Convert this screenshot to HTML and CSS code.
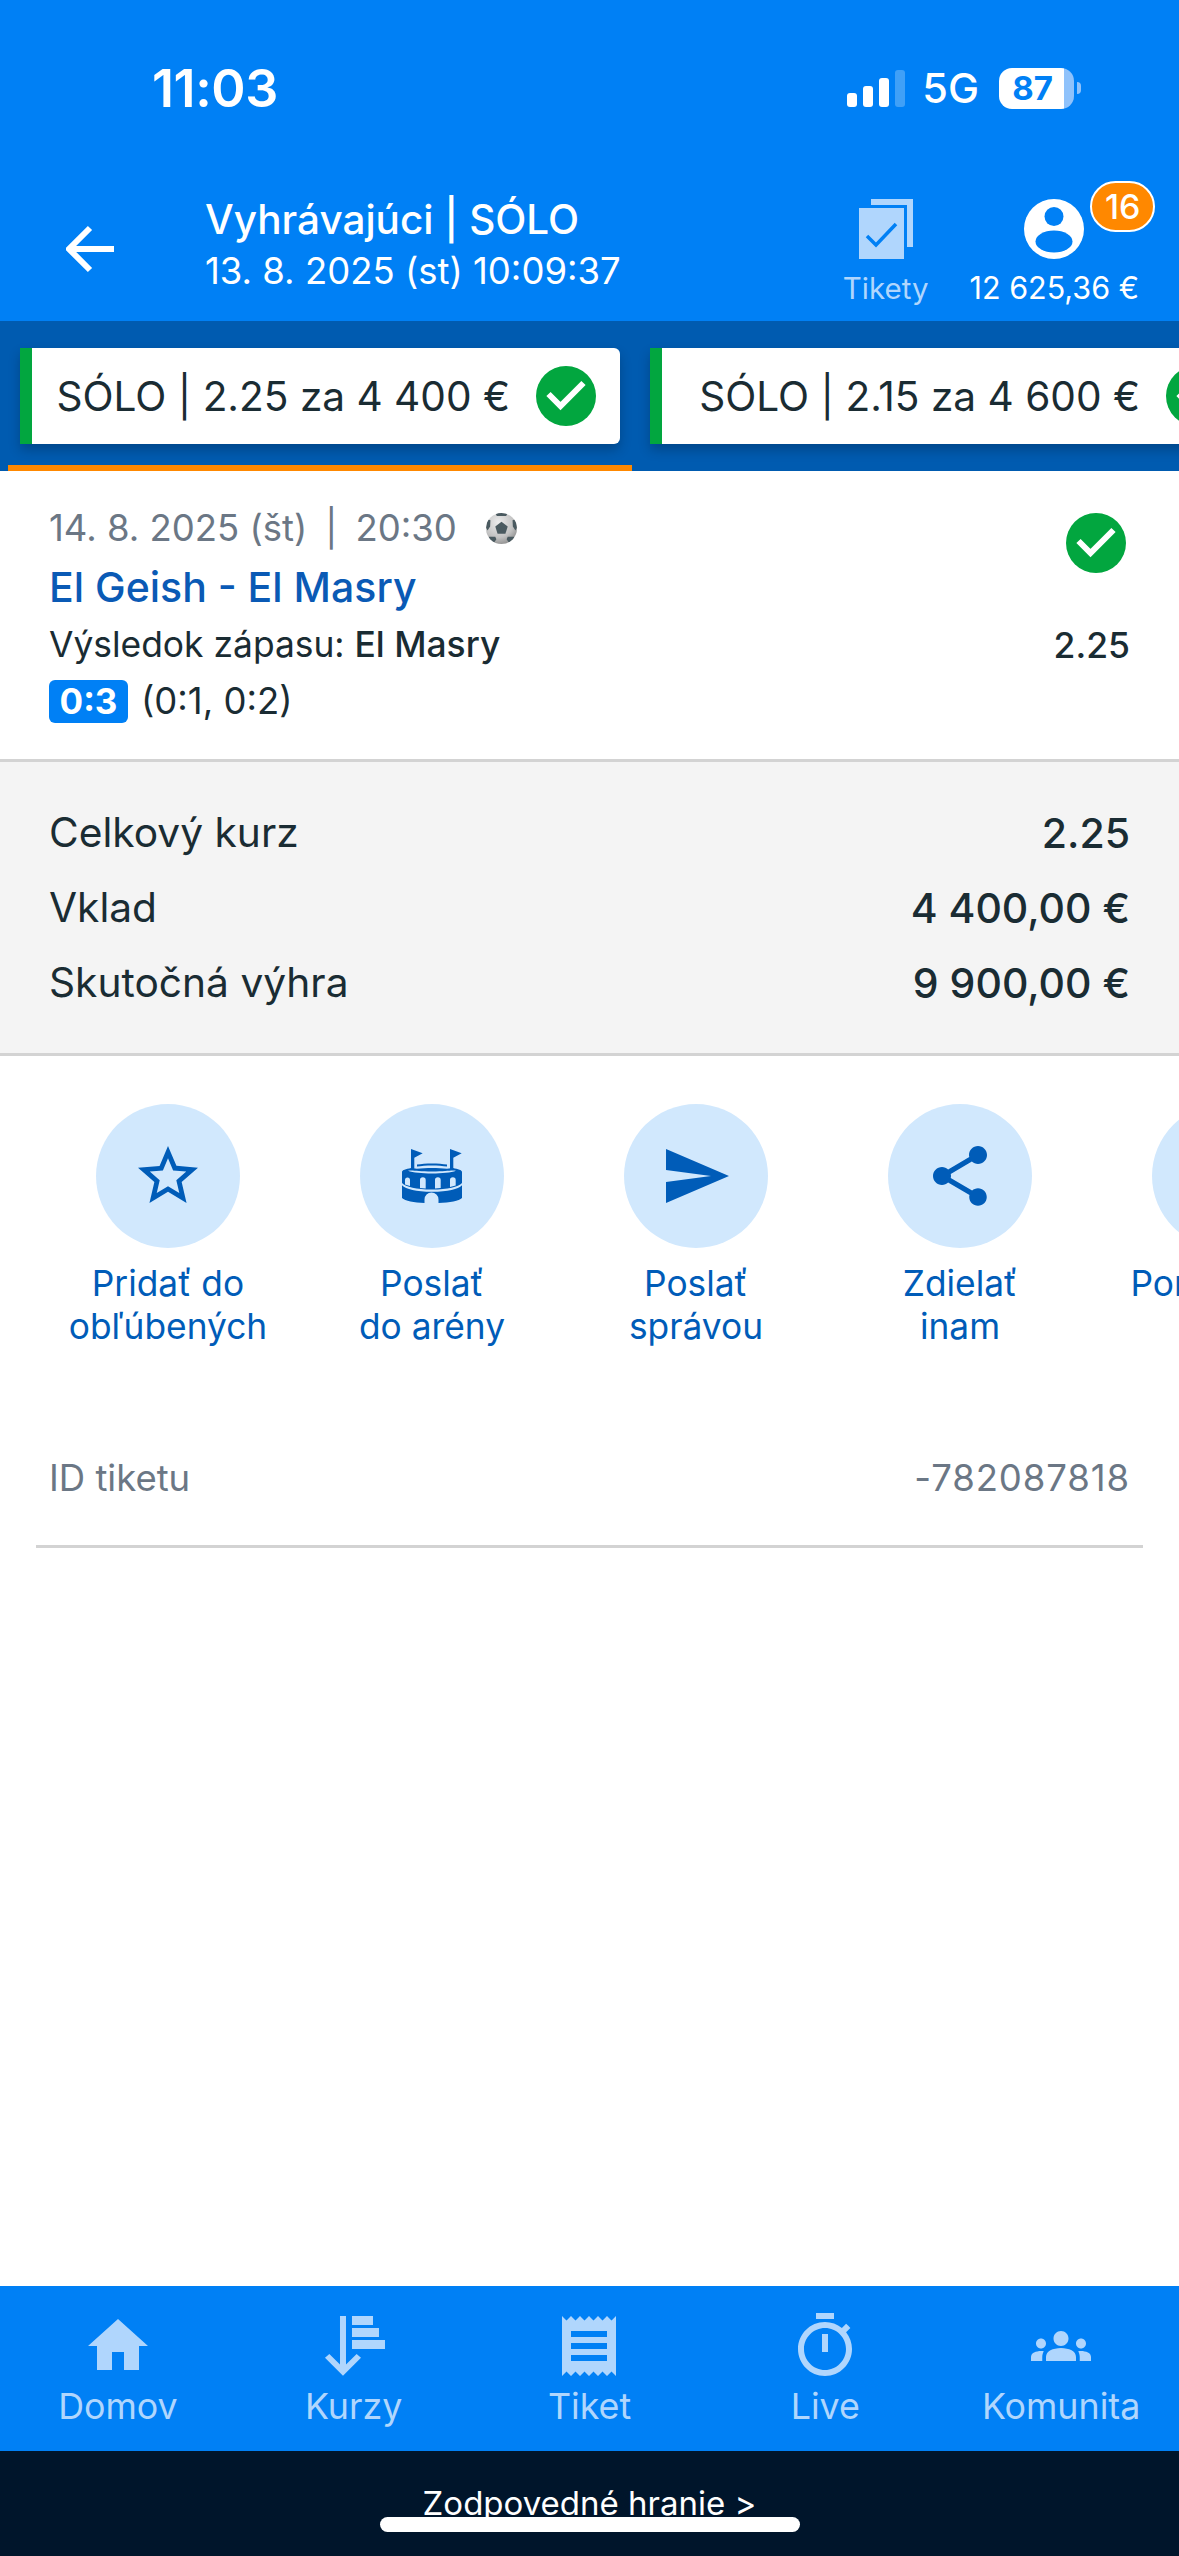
FILE: index.html
```html
<!DOCTYPE html>
<html lang="sk">
<head>
<meta charset="utf-8">
<title>Vyhrávajúci | SÓLO</title>
<link rel="stylesheet" href="styles.css">
</head>
<body>
<div class="screen">
  <header class="header">
    <div class="status">
      <span class="time">11:03</span>
      <div class="status-right">
        <div class="signal"><i class="b1"></i><i class="b2"></i><i class="b3"></i><i class="b4"></i></div>
        <span class="net">5G</span>
        <div class="battery"><span>87</span></div>
        <i class="battery-tip"></i>
      </div>
    </div>
    <div class="toolbar">
      <svg class="back" viewBox="0 0 48 48"><path d="M24 3 3 24l21 21M3 24h45" fill="none" stroke="#fff" stroke-width="6"/></svg>
      <div class="titles">
        <div class="title">Vyhrávajúci | SÓLO</div>
        <div class="subtitle">13. 8. 2025 (st) 10:09:37</div>
      </div>
      <div class="tools">
        <div class="tool tool-tickets">
          <svg class="tool-icon" width="54" height="60" viewBox="0 0 54 60">
            <path d="M12 0H54V48H48V6H12Z" fill="#b0d6fd"/>
            <rect y="9" width="45" height="51" fill="#b0d6fd"/>
            <path d="M8 37l9 9 20-21" fill="none" stroke="#0080f5" stroke-width="3.5"/>
          </svg>
          <span class="tool-label">Tikety</span>
        </div>
        <div class="tool tool-account">
          <div class="avatar">
            <svg width="60" height="60" viewBox="0 0 60 60">
              <circle cx="30" cy="30" r="30" fill="#fff"/>
              <circle cx="30" cy="17.5" r="9.5" fill="#0080f5"/>
              <ellipse cx="30" cy="42.5" rx="18.5" ry="11" fill="#0080f5"/>
            </svg>
            <span class="badge">16</span>
          </div>
          <span class="tool-label balance">12 625,36 €</span>
        </div>
      </div>
    </div>
  </header>

  <nav class="tabs">
    <div class="tab active">
      <div class="tab-card">
        <span>SÓLO | 2.25 za 4 400 €</span>
        <svg class="check" viewBox="0 0 60 60"><circle cx="30" cy="30" r="30" fill="#02a63f"/><path d="M12.500 28l12 12 23-23" fill="none" stroke="#fff" stroke-width="6"/></svg>
      </div>
    </div>
    <div class="tab">
      <div class="tab-card">
        <span>SÓLO | 2.15 za 4 600 €</span>
        <svg class="check" viewBox="0 0 60 60"><circle cx="30" cy="30" r="30" fill="#02a63f"/><path d="M12.500 28l12 12 23-23" fill="none" stroke="#fff" stroke-width="6"/></svg>
      </div>
    </div>
  </nav>

  <section class="match">
    <div class="match-main">
      <div class="match-date">
        <span>14. 8. 2025 (št)<span class="date-sep">|</span>20:30</span>
        <svg class="ball" viewBox="0 0 30 30">
          <defs>
            <radialGradient id="ballg" cx="40%" cy="30%" r="75%"><stop offset="0" stop-color="#ececec"/><stop offset=".65" stop-color="#c2c2c2"/><stop offset="1" stop-color="#8d8d8d"/></radialGradient>
            <clipPath id="ballc"><circle cx="15" cy="15" r="15"/></clipPath>
          </defs>
          <circle cx="15" cy="15" r="15" fill="url(#ballg)"/>
          <g clip-path="url(#ballc)" fill="#4a5a60">
            <path d="M15 8.500l6 4.500-2.200 7h-7.600L9 13z"/>
            <path d="M9 0h12l-1.500 3h-9z"/>
            <path d="M1.500 6l2.800 1-.3 6-2.500 4L0 14zM28.500 6l-2.800 1 .3 6 2.500 4 1.500-3z"/>
            <path d="M3 23h6l1 2.500-3 4.500-5-3zM27 23h-6l-1 2.500 3 4.500 5-3z"/>
          </g>
        </svg>
      </div>
      <div class="match-name">El Geish - El Masry</div>
      <div class="match-pick">Výsledok zápasu: <span class="pick-value">El Masry</span></div>
      <div class="match-score"><span class="score">0:3</span><span>(0:1, 0:2)</span></div>
    </div>
    <div class="match-side">
      <svg class="check" viewBox="0 0 60 60"><circle cx="30" cy="30" r="30" fill="#02a63f"/><path d="M12.500 28l12 12 23-23" fill="none" stroke="#fff" stroke-width="6"/></svg>
      <span class="match-odd">2.25</span>
    </div>
  </section>

  <section class="summary">
    <div class="sum-row"><span>Celkový kurz</span><span class="sum-val">2.25</span></div>
    <div class="sum-row"><span>Vklad</span><span class="sum-val">4 400,00 €</span></div>
    <div class="sum-row"><span>Skutočná výhra</span><span class="sum-val">9 900,00 €</span></div>
  </section>

  <section class="actions">
    <div class="action">
      <div class="circle"><svg width="72" height="72" viewBox="0 0 24 24"><path d="M22 9.24l-7.19-.62L12 2 9.19 8.63 2 9.24l5.46 4.73L5.82 21 12 17.27 18.18 21l-1.63-7.03L22 9.24zM12 15.4l-3.76 2.27 1-4.28-3.32-2.88 4.38-.38L12 6.1l1.71 4.04 4.38.38-3.32 2.88 1 4.28L12 15.4z"/></svg></div>
      <div class="action-label">Pridať do<br>obľúbených</div>
    </div>
    <div class="action">
      <div class="circle">
        <svg width="60" height="54" viewBox="0 0 60 54">
          <path d="M15 15.500c8-1.500 22-1.500 30 0v2c-8-1.500-22-1.500-30 0z"/>
          <path d="M0 23c0-2 4-3 9-4l6 .8c9-1 21-1 30 0l6-.8c5 1 9 2 9 4v26c-3 3-12 4.500-23.500 5v-3.500a7 7 0 0 0-14 0V54C12 53.500 3 52 0 49z"/>
          <path d="M6 21.800c5-.8 10 .8 24 .8s19-1.600 24-.8c-5 1.800-14 2.700-24 2.700s-19-.9-24-2.700z" class="cut"/>
          <path d="M0 34c4 4 14 6.500 30 6.500S56 38 60 34v2.200c-4 4-14 6.500-30 6.500S4 40.200 0 36.200zM3 35.500V31a2.500 2.500 0 0 1 5 0v6zM18 39v-8a2.850 2.850 0 0 1 5.700 0v8.500zM33 39.500V31a2.850 2.850 0 0 1 5.700 0v8zM48 38v-7a2.850 2.850 0 0 1 5.700 0v5.500z" class="cut"/>
          <path d="M9 0l11.700 4.300L12.300 8.700V21H9zM48 0l11.700 4.300L51.300 8.700V21H48z"/>
        </svg>
      </div>
      <div class="action-label">Poslať<br>do arény</div>
    </div>
    <div class="action">
      <div class="circle"><svg width="72" height="72" viewBox="0 0 24 24"><path d="M2.010 21 23 12 2.010 3 2 10l15 2-15 2z"/></svg></div>
      <div class="action-label">Poslať<br>správou</div>
    </div>
    <div class="action">
      <div class="circle"><svg width="72" height="72" viewBox="0 0 24 24"><path d="M18 16.080c-.76 0-1.440.3-1.960.77L8.910 12.700c.05-.23.09-.46.09-.7s-.04-.47-.09-.7l7.050-4.110c.54.5 1.250.81 2.040.81 1.660 0 3-1.340 3-3s-1.340-3-3-3-3 1.340-3 3c0 .24.04.47.09.7L8.040 9.810C7.500 9.310 6.790 9 6 9c-1.660 0-3 1.340-3 3s1.340 3 3 3c.79 0 1.500-.31 2.040-.81l7.120 4.160c-.05.21-.08.43-.08.65 0 1.610 1.310 2.920 2.920 2.920 1.610 0 2.920-1.310 2.920-2.920s-1.310-2.920-2.920-2.920z"/></svg></div>
      <div class="action-label">Zdielať<br>inam</div>
    </div>
    <div class="action">
      <div class="circle"></div>
      <div class="action-label">Porovnanie</div>
    </div>
  </section>

  <section class="ticket-id"><span>ID tiketu</span><span class="ticket-num">-782087818</span></section>

  <div class="spacer"></div>

  <nav class="bottom-nav">
    <div class="nav-item"><svg class="nav-icon" viewBox="0 0 24 24"><path d="M10 20v-6h4v6h5v-8h3L12 3 2 12h3v8z"/></svg><span>Domov</span></div>
    <div class="nav-item"><svg class="nav-icon" viewBox="0 0 24 24"><path d="M7.330 2h2v16.200l3.550-3.530 1.450 1.230-6 6-6-6 1.450-1.230 3.550 3.530zM11.330 2h7v3h-7zM11.330 6h9v3h-9zM11.330 10h11v3h-11z"/></svg><span>Kurzy</span></div>
    <div class="nav-item"><svg class="nav-icon" viewBox="0 0 24 24"><path d="M18 17H6v-2h12v2zm0-4H6v-2h12v2zm0-4H6V7h12v2zM3 22l1.500-1.500L6 22l1.500-1.500L9 22l1.500-1.500L12 22l1.500-1.500L15 22l1.500-1.500L18 22l1.500-1.500L21 22V2l-1.500 1.500L18 2l-1.500 1.500L15 2l-1.500 1.500L12 2l-1.500 1.500L9 2 7.500 3.500 6 2 4.500 3.500 3 2v20z"/></svg><span>Tiket</span></div>
    <div class="nav-item"><svg class="nav-icon" viewBox="0 0 24 24"><path fill-rule="evenodd" d="M9 1h6v2H9zM19.030 7.390l1.420-1.420c-.43-.51-.9-.99-1.410-1.410l-1.420 1.420C16.070 4.740 14.120 4 12 4c-4.970 0-9 4.030-9 9s4.020 9 9 9 9-4.030 9-9c0-2.120-.74-4.070-1.970-5.610zM12 20c-3.870 0-7-3.130-7-7s3.130-7 7-7 7 3.130 7 7-3.130 7-7 7z"/><path d="M11 8h2v6h-2z"/></svg><span>Live</span></div>
    <div class="nav-item"><svg class="nav-icon nav-icon-wide" viewBox="0 0 24 24"><path d="M12 12.750c1.630 0 3.070.39 4.240.9 1.080.48 1.760 1.560 1.760 2.730V18H6v-1.610c0-1.180.68-2.260 1.760-2.730 1.170-.52 2.610-.91 4.240-.91zM4 13c1.100 0 2-.9 2-2s-.9-2-2-2-2 .9-2 2 .9 2 2 2zm1.130 1.100c-.37-.06-.74-.1-1.130-.1-.99 0-1.930.21-2.780.58C.48 14.900 0 15.620 0 16.430V18h4.500v-1.610c0-.83.23-1.610.63-2.290zM20 13c1.100 0 2-.9 2-2s-.9-2-2-2-2 .9-2 2 .9 2 2 2zm4 3.430c0-.81-.48-1.530-1.220-1.850-.85-.37-1.790-.58-2.780-.58-.39 0-.76.04-1.130.1.4.68.63 1.460.63 2.290V18H24v-1.570zM12 6c1.660 0 3 1.340 3 3s-1.340 3-3 3-3-1.340-3-3 1.340-3 3-3z"/></svg><span>Komunita</span></div>
  </nav>

  <footer class="footer">
    <span>Zodpovedné hranie &gt;</span>
    <i class="home-indicator"></i>
  </footer>
</div>
</body>
</html>
```

FILE: styles.css
```css
* { box-sizing: border-box; }
html, body { margin: 0; padding: 0; background: #fff; }
.screen {
  position: relative;
  width: 1179px;
  height: 2556px;
  display: flex;
  flex-direction: column;
  overflow: hidden;
  font-family: Inter, "Liberation Sans", sans-serif;
  color: #1a2c33;
}

/* header */
.header { height: 321px; background: #0080f5; color: #fff; flex-shrink: 0; }
.status { height: 176px; display: flex; align-items: center; justify-content: space-between; padding: 0 98px 0 152px; }
.time { font-size: 52px; font-weight: 600; letter-spacing: -.4px; }
.status-right { display: flex; align-items: center; }
.signal { display: flex; align-items: flex-end; gap: 6px; height: 37px; margin-right: 17px; }
.signal i { display: block; width: 10px; background: #fff; border-radius: 3px; }
.signal .b1 { height: 14px; }
.signal .b2 { height: 21px; }
.signal .b3 { height: 29px; }
.signal .b4 { height: 37px; background: rgba(255,255,255,.25); }
.net { font-size: 41.500px; font-weight: 500; margin-right: 20px; }
.battery {
  width: 75px; height: 41px; border-radius: 13px;
  background: linear-gradient(90deg, #fff 87%, #8fc2fb 87%);
  display: flex; align-items: center; justify-content: center;
  padding-right: 8px;
  color: #0080f5; font-size: 33px; font-weight: 700;
}
.battery-tip { display: block; width: 4px; height: 12px; margin-left: 3px; background: #8fc2fb; border-radius: 0 6px 6px 0; }

.toolbar { height: 145px; display: flex; align-items: flex-start; padding: 0 40px 0 66px; }
.back { width: 48px; height: 48px; margin: 49px 91px 0 0; flex-shrink: 0; }
.titles { padding-top: 21px; }
.title { font-size: 40.500px; font-weight: 500; line-height: 46px; }
.subtitle { font-size: 36.500px; line-height: 46px; margin-top: 5px; }
.tools { margin-left: auto; display: flex; gap: 41px; padding-top: 23px; }
.tool { display: flex; flex-direction: column; align-items: center; }
.tool-label { font-size: 29.500px; line-height: 36px; margin-top: 11px; color: #b0d6fd; white-space: nowrap; }
.balance { color: #fff; font-size: 30.500px; }
.avatar { position: relative; width: 60px; height: 60px; }
.avatar svg { display: block; }
.badge {
  position: absolute; left: 66px; top: -18px;
  width: 65px; height: 51px; border-radius: 26px;
  background: #ff8800; border: 2px solid #fff;
  display: flex; align-items: center; justify-content: center;
  font-size: 34px; font-weight: 500; color: #fff;
}

/* tabs */
.tabs { height: 150px; flex-shrink: 0; background: #005bb0; display: flex; gap: 6px; padding-left: 8px; overflow: hidden; }
.tab { width: 624px; flex-shrink: 0; padding: 27px 12px 21px; }
.tab.active { box-shadow: inset 0 -6px 0 #ff8800; }
.tab-card {
  height: 96px; width: 600px;
  background: #fff; border-left: 12px solid #02a63f; border-radius: 0 6px 6px 0;
  box-shadow: 0 6px 12px rgba(0,0,0,.22);
  display: flex; align-items: center; justify-content: flex-end; gap: 26px;
  padding: 0 24px 0 0;
  font-size: 40.600px; white-space: nowrap;
}
.check { width: 60px; height: 60px; display: block; flex-shrink: 0; }

/* match */
.match { height: 291px; flex-shrink: 0; border-bottom: 3px solid #d3d3d3; display: flex; justify-content: space-between; padding: 37px 49px 0; }
.match-date { display: flex; align-items: center; font-size: 36.500px; color: #6b7785; height: 40px; }
.date-sep { margin: 0 18px; }
.ball { width: 31px; height: 31px; margin-left: 29px; }
.match-name { font-size: 41px; font-weight: 500; color: #0a5ab5; line-height: 48px; margin-top: 15px; }
.match-pick { font-size: 35.400px; line-height: 40px; margin-top: 14px; }
.pick-value { font-weight: 500; }
.match-score { display: flex; align-items: center; gap: 13px; font-size: 36.500px; margin-top: 14px; }
.score { width: 79px; height: 43px; border-radius: 6px; background: #0080f5; color: #fff; font-weight: 700; font-size: 35px; display: flex; align-items: center; justify-content: center; }
.match-side { display: flex; flex-direction: column; align-items: flex-end; padding-top: 5px; }
.match-side .check { margin-right: 4px; }
.match-odd { font-size: 35.500px; line-height: 40px; font-weight: 500; margin-top: 53px; }

/* summary */
.summary { height: 294px; flex-shrink: 0; background: #f4f4f4; border-bottom: 3px solid #d3d3d3; padding: 33px 49px 0; font-size: 40.700px; }
.sum-row { height: 75px; display: flex; align-items: center; justify-content: space-between; }
.sum-val { font-weight: 500; font-size: 41px; }

/* actions */
.actions { display: flex; padding: 48px 0 0 36px; flex-shrink: 0; }
.action { width: 264px; flex-shrink: 0; display: flex; flex-direction: column; align-items: center; }
.circle { width: 144px; height: 144px; border-radius: 50%; background: #d1e8fd; display: flex; align-items: center; justify-content: center; }
.circle svg { display: block; fill: #005cb8; }
.circle svg .cut { fill: #d1e8fd; }
.action-label { margin-top: 14px; font-size: 35.300px; line-height: 43px; font-weight: 400; color: #005cb8; text-align: center; white-space: nowrap; height: 88px; }

/* ticket id */
.ticket-id { margin: 81px 36px 0; height: 117px; padding: 0 13px 21px; border-bottom: 3px solid #d3d3d3; display: flex; align-items: center; justify-content: space-between; font-size: 36.500px; color: #6b7785; flex-shrink: 0; }
.ticket-num { letter-spacing: .9px; }

.spacer { flex: 1; }

/* bottom nav */
.bottom-nav { height: 165px; flex-shrink: 0; background: #0080f5; display: grid; grid-template-columns: repeat(5, 1fr); padding-top: 24px; }
.nav-item { display: flex; flex-direction: column; align-items: center; font-size: 35.800px; color: #b0d6fd; }
.nav-icon { display: block; width: 72px; height: 72px; fill: #b0d6fd; }
.nav-icon-wide { width: 60px; height: 60px; margin: 6px 0; }
.nav-item span { line-height: 40px; margin-top: 4px; }

/* footer */
.footer { position: relative; height: 105px; flex-shrink: 0; background: #00152b; color: #fff; font-size: 33px; text-align: center; padding-top: 32px; line-height: 40px; }
.home-indicator { position: absolute; left: 380px; top: 66px; width: 420px; height: 15px; border-radius: 8px; background: #fff; }
```
